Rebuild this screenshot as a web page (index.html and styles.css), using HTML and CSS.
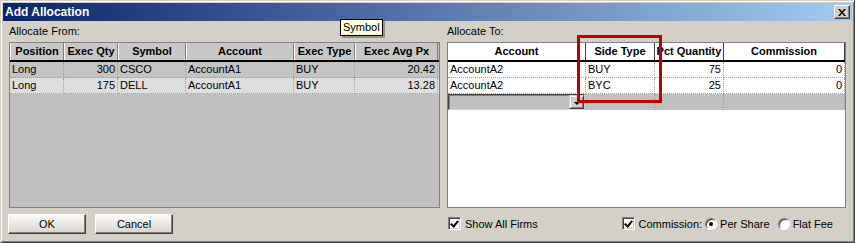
FILE: index.html
```html
<!DOCTYPE html>
<html>
<head>
    <title>Add Allocation</title>
    <link rel="stylesheet" href="styles.css">
</head>
<body>
    <div class="window">
        <div class="titlebar">
            <span class="title">Add Allocation</span>
            <div class="close-btn">
                <svg width="8" height="7" viewBox="0 0 8 7">
                    <path d="M0 0h2l2 2.5 2-2.5h2l-3 3.5 3 3.5h-2l-2-2.5-2 2.5h-2l3-3.5z" fill="#000"/>
                </svg>
            </div>
        </div>

        <div class="content">
            <!-- Allocate From -->
            <div class="panel panel-from">
                <div class="label">Allocate From:</div>
                <div class="grid grid-from">
                    <div class="row head">
                        <div class="hcell">Position</div>
                        <div class="hcell">Exec Qty</div>
                        <div class="hcell">Symbol</div>
                        <div class="hcell">Account</div>
                        <div class="hcell">Exec Type</div>
                        <div class="hcell">Exec Avg Px</div>
                    </div>
                    <div class="row odd">
                        <div class="cell">Long</div>
                        <div class="cell num">300</div>
                        <div class="cell">CSCO</div>
                        <div class="cell">AccountA1</div>
                        <div class="cell">BUY</div>
                        <div class="cell num">20.42</div>
                    </div>
                    <div class="row even">
                        <div class="cell">Long</div>
                        <div class="cell num">175</div>
                        <div class="cell">DELL</div>
                        <div class="cell">AccountA1</div>
                        <div class="cell">BUY</div>
                        <div class="cell num">13.28</div>
                    </div>
                </div>
                <div class="buttons">
                    <div class="btn">OK</div>
                    <div class="btn">Cancel</div>
                </div>
            </div>

            <!-- Allocate To -->
            <div class="panel panel-to">
                <div class="label">Allocate To:</div>
                <div class="grid grid-to">
                    <div class="row head">
                        <div class="hcell">Account</div>
                        <div class="hcell">Side Type</div>
                        <div class="hcell">Pct Quantity</div>
                        <div class="hcell">Commission</div>
                    </div>
                    <div class="row">
                        <div class="cell">AccountA2</div>
                        <div class="cell">BUY</div>
                        <div class="cell num">75</div>
                        <div class="cell num">0</div>
                    </div>
                    <div class="row">
                        <div class="cell">AccountA2</div>
                        <div class="cell">BYC</div>
                        <div class="cell num">25</div>
                        <div class="cell num">0</div>
                    </div>
                    <div class="row new-row">
                        <div class="combo">
                            <div class="combo-btn"></div>
                        </div>
                        <div class="cell"></div>
                        <div class="cell"></div>
                        <div class="cell"></div>
                    </div>
                </div>
                <div class="options">
                    <label class="check"><span class="box checked"></span>Show All Firms</label>
                    <div class="commission">
                        <label class="check"><span class="box checked"></span>Commission:</label>
                        <label class="radio"><span class="dot selected"></span>Per Share</label>
                        <label class="radio"><span class="dot"></span>Flat Fee</label>
                    </div>
                </div>
            </div>
        </div>

        <div class="tooltip">Symbol</div>
        <div class="highlight"></div>
    </div>
</body>
</html>
```

FILE: styles.css
```css
* {
    box-sizing: border-box;
}

body {
    margin: 0;
    font-family: "Liberation Sans", Arial, sans-serif;
    font-size: 11px;
    color: #000;
    background: #d4d0c8;
}

.window {
    position: relative;
    width: 855px;
    height: 243px;
    display: flex;
    flex-direction: column;
    padding: 2px;
    background: #d4d0c8;
    border: 1px solid;
    border-color: #d4d0c8 #404040 #404040 #d4d0c8;
    box-shadow: inset 1px 1px 0 #fff, inset -1px -1px 0 #808080;
}

.titlebar {
    height: 18px;
    display: flex;
    align-items: center;
    justify-content: space-between;
    padding: 0 2px 0 2px;
    background: linear-gradient(to right, #0a246a, #a6caf0);
}

.title {
    color: #fff;
    font-weight: bold;
    font-size: 12px;
}

.close-btn {
    width: 16px;
    height: 14px;
    display: flex;
    align-items: center;
    justify-content: center;
    background: #d4d0c8;
    border: 1px solid;
    border-color: #fff #404040 #404040 #fff;
    box-shadow: inset -1px -1px 0 #808080;
}

.content {
    flex: 1;
    display: flex;
    gap: 7px;
    padding: 0 6px 0 5px;
}

.panel {
    display: flex;
    flex-direction: column;
}

.panel-from {
    width: 432px;
}

.panel-to {
    width: 399px;
}

.label {
    height: 21px;
    padding: 4px 0 0 1px;
    line-height: 13px;
}

.panel-to .label {
    padding-left: 0;
}

.grid {
    height: 166px;
    border: 1px solid #808080;
}

.grid-from {
    margin-left: 1px;
    width: 431px;
    background: #c0c0c0;
}

.grid-to {
    background: #fff;
}

.row {
    display: grid;
    height: 16px;
}

.grid-from .row {
    grid-template-columns: 54px 54px 68px 108px 61px 83px;
}

.grid-to .row {
    grid-template-columns: 138px 69px 69px 121px;
}

.row.head {
    height: 19px;
    border-bottom: 2px solid #000;
}

.hcell {
    font-weight: bold;
    text-align: center;
    line-height: 16px;
    white-space: nowrap;
    overflow: hidden;
    border-left: 1px solid #fff;
    border-right: 1px solid #808080;
}

.grid-from .hcell {
    background: #c8c8c8;
}

.grid-to .hcell {
    background: #fff;
    border-left: none;
    border-right: 1px solid #404040;
}

.cell {
    line-height: 15px;
    padding: 0 2px;
    white-space: nowrap;
    overflow: hidden;
    border-right: 1px dotted #a0a0a0;
    border-bottom: 1px dotted #a0a0a0;
}

.cell.num {
    text-align: right;
}

.row.odd {
    background: #c4c4c4;
}

.row.even {
    background: #dedede;
}

.row.new-row {
    background: #c0c0c0;
}

.new-row .cell {
    border-bottom: none;
}

.combo {
    position: relative;
    margin-right: 1px;
    background: #c0c0c0;
    border: 1px solid;
    border-color: #404040 #d4d0c8 #d4d0c8 #404040;
    box-shadow: inset 1px 1px 0 #808080;
}

.combo-btn {
    position: absolute;
    right: 0;
    top: 0;
    width: 15px;
    height: 14px;
    background: #d4d0c8;
    border: 1px solid;
    border-color: #d4d0c8 #404040 #404040 #d4d0c8;
    box-shadow: inset 1px 1px 0 #fff, inset -1px -1px 0 #808080;
}

.combo-btn::after {
    content: "";
    position: absolute;
    left: 4px;
    top: 6px;
    border-left: 3px solid transparent;
    border-right: 3px solid transparent;
    border-top: 3px solid #000;
}

.buttons {
    display: flex;
    gap: 9px;
    margin-top: 6px;
}

.btn {
    width: 78px;
    height: 20px;
    line-height: 18px;
    text-align: center;
    background: linear-gradient(#fbfbf9, #d8d5cd);
    border: 1px solid;
    border-color: #fff #404040 #404040 #fff;
    box-shadow: inset -1px -1px 0 #808080;
}

.options {
    display: flex;
    align-items: center;
    margin-top: 8px;
    height: 15px;
}

.commission {
    display: flex;
    align-items: center;
    margin-left: auto;
    margin-right: 13px;
}

.check,
.radio {
    display: flex;
    align-items: center;
}

.box {
    position: relative;
    width: 13px;
    height: 13px;
    margin: 0 4px 0 1px;
    background: #fff;
    border: 1px solid;
    border-color: #808080 #fff #fff #808080;
    box-shadow: inset 1px 1px 0 #404040, inset -1px -1px 0 #d4d0c8;
}

.box.checked::after {
    content: "";
    position: absolute;
    left: 2px;
    top: 2px;
    width: 3px;
    height: 6px;
    border: solid #000;
    border-width: 0 2px 2px 0;
    transform: translate(1px, -1px) rotate(40deg);
}

.commission .check {
    margin-right: 2px;
}

.radio {
    margin-left: 1px;
}

.radio + .radio {
    margin-left: 8px;
}

.dot {
    position: relative;
    width: 12px;
    height: 12px;
    margin-right: 3px;
    border-radius: 50%;
    background: #fff;
    border: 1px solid;
    border-color: #808080 #fff #fff #808080;
    box-shadow: inset 1px 1px 0 #404040;
}

.dot.selected::after {
    content: "";
    position: absolute;
    left: 3px;
    top: 3px;
    width: 4px;
    height: 4px;
    border-radius: 50%;
    background: #000;
}

.tooltip {
    position: absolute;
    left: 339px;
    top: 18px;
    height: 17px;
    padding: 0 2px;
    line-height: 15px;
    background: #ffffe1;
    border: 1px solid #000;
    box-shadow: 2px 2px 0 rgba(0, 0, 0, 0.3);
}

.highlight {
    position: absolute;
    left: 576px;
    top: 34px;
    width: 85px;
    height: 68px;
    border: 3px solid #c00000;
}
```
